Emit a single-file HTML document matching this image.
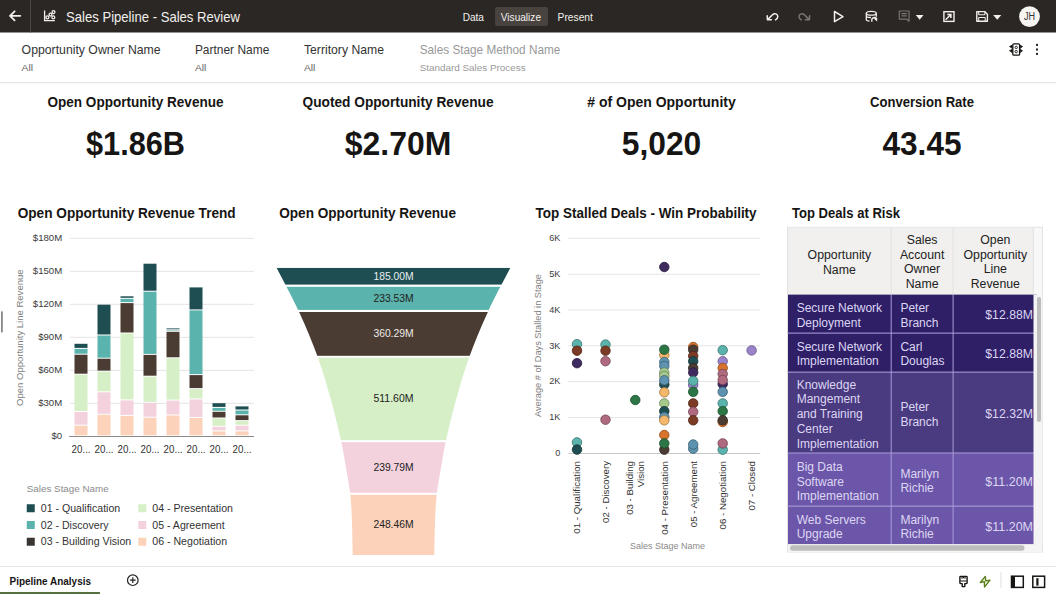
<!DOCTYPE html>
<html><head><meta charset="utf-8"><title>Sales Pipeline - Sales Review</title>
<style>
html,body{margin:0;padding:0;background:#fff;width:1056px;height:594px;overflow:hidden}
svg{display:block;font-family:"Liberation Sans", sans-serif}
</style></head><body>
<svg width="1056" height="594" viewBox="0 0 1056 594">
<rect x="0" y="0" width="1056" height="32.5" fill="#2b2724"/>
<line x1="30.5" y1="0" x2="30.5" y2="32.5" stroke="#4a4541" stroke-width="1"/>
<path d="M20.3 15.8 H10 M14.6 11.3 L10 15.8 L14.6 20.3" stroke="#f2f0ed" stroke-width="1.8" fill="none" stroke-linecap="round" stroke-linejoin="round"/>
<path d="M44.6 10.4 V20.6 H54.8" stroke="#f2f0ed" stroke-width="1.3" fill="none"/>
<circle cx="47.4" cy="17.4" r="1.45" stroke="#f2f0ed" stroke-width="1.3" fill="none"/>
<circle cx="50.5" cy="14.6" r="1.45" stroke="#f2f0ed" stroke-width="1.3" fill="none"/>
<circle cx="53.5" cy="12.1" r="1.45" stroke="#f2f0ed" stroke-width="1.3" fill="none"/>
<circle cx="53.3" cy="17.4" r="1.45" stroke="#f2f0ed" stroke-width="1.3" fill="none"/>
<text x="66" y="22.2" font-size="14.5" fill="#f2f0ed" text-anchor="start" textLength="174" lengthAdjust="spacingAndGlyphs">Sales Pipeline - Sales Review</text>
<rect x="495" y="7" width="53" height="19" rx="2" fill="#48433f"/>
<text x="462.7" y="20.5" font-size="11" fill="#f2f0ed" text-anchor="start" textLength="21.3" lengthAdjust="spacingAndGlyphs">Data</text>
<text x="500.8" y="20.5" font-size="11" fill="#f2f0ed" text-anchor="start" textLength="40.2" lengthAdjust="spacingAndGlyphs">Visualize</text>
<text x="557.6" y="20.5" font-size="11" fill="#f2f0ed" text-anchor="start" textLength="35.3" lengthAdjust="spacingAndGlyphs">Present</text>
<path d="M767.2 15.8 L767.4 19.8 L771.4 19.8 M767.6 19.6 L772.5 14.7 C774.5 12.7 777.8 13.8 777.8 16.5 C777.8 17.8 776.8 19 775.5 19.8" stroke="#f2f0ed" stroke-width="1.5" fill="none" stroke-linecap="round" stroke-linejoin="round"/>
<path d="M809.6 15.8 L809.4 19.8 L805.4 19.8 M809.2 19.6 L804.3 14.7 C802.3 12.7 799 13.8 799 16.5 C799 17.8 800 19 801.3 19.8" stroke="#7a7572" stroke-width="1.5" fill="none" stroke-linecap="round" stroke-linejoin="round"/>
<path d="M834.5 11.5 L843 16.6 L834.5 21.7 Z" stroke="#f2f0ed" stroke-width="1.5" fill="none" stroke-linejoin="round"/>
<ellipse cx="871.3" cy="13.2" rx="5" ry="1.9" stroke="#f2f0ed" stroke-width="1.3" fill="none"/>
<path d="M866.3 13.2 V19.8 C866.3 20.6 867.5 21 869.5 21.2 M876.3 13.2 V16.8 M866.3 16.3 C867 17.2 869 17.6 871 17.5" stroke="#f2f0ed" stroke-width="1.3" fill="none"/>
<path d="M872.2 21.6 A2.5 2.5 0 1 1 876.2 18.6" stroke="#f2f0ed" stroke-width="1.4" fill="none"/>
<path d="M873.6 18.6 L877.2 21.6 L877.2 17.6 Z" fill="#f2f0ed"/>
<path d="M899.3 11 H909 V21.3 L906.7 19.2 H899.3 Z M901.5 13.6 H906.8 M901.5 15.9 H906.8" stroke="#7a7572" stroke-width="1.2" fill="none" stroke-linejoin="round"/>
<path d="M915.8 15 H923.5 L919.65 19.8 Z" fill="#f2f0ed"/>
<rect x="943.9" y="11.7" width="10.1" height="9.7" stroke="#f2f0ed" stroke-width="1.4" fill="none"/>
<path d="M945.6 19.8 L950.9 14.5 M947.3 14.5 H950.9 V18.1" stroke="#f2f0ed" stroke-width="1.5" fill="none"/>
<path d="M976.8 11.6 H984.6 L987.4 14.3 V21.3 H976.8 Z" stroke="#f2f0ed" stroke-width="1.4" fill="none" stroke-linejoin="round"/>
<path d="M978.7 11.6 V14.2 Q978.7 14.8 979.3 14.8 H984.3 Q984.9 14.8 984.9 14.2 V11.6 M978.7 21.3 V18 Q978.7 17.4 979.3 17.4 H984.6 Q985.2 17.4 985.2 18 V21.3" stroke="#f2f0ed" stroke-width="1.05" fill="none"/>
<path d="M993.2 15 H1001.3 L997.25 19.8 Z" fill="#f2f0ed"/>
<circle cx="1029.5" cy="16.6" r="10.4" fill="#f7f5f2"/>
<text x="1029.5" y="20" font-size="10" fill="#333" text-anchor="middle" textLength="11.1" lengthAdjust="spacingAndGlyphs">JH</text>
<rect x="0" y="82" width="1056" height="1.2" fill="#e6e6e6"/>
<text x="21.6" y="54" font-size="12.2" fill="#333" text-anchor="start" textLength="139" lengthAdjust="spacingAndGlyphs">Opportunity Owner Name</text>
<text x="21.6" y="71.2" font-size="9.6" fill="#666" text-anchor="start" textLength="11.4" lengthAdjust="spacingAndGlyphs">All</text>
<text x="194.9" y="54" font-size="12.2" fill="#333" text-anchor="start" textLength="74.4" lengthAdjust="spacingAndGlyphs">Partner Name</text>
<text x="194.9" y="71.2" font-size="9.6" fill="#666" text-anchor="start" textLength="11.4" lengthAdjust="spacingAndGlyphs">All</text>
<text x="304" y="54" font-size="12.2" fill="#333" text-anchor="start">Territory Name</text>
<text x="304" y="71.2" font-size="9.6" fill="#666" text-anchor="start" textLength="11.4" lengthAdjust="spacingAndGlyphs">All</text>
<text x="419.7" y="54" font-size="12.2" fill="#999" text-anchor="start" textLength="140.6" lengthAdjust="spacingAndGlyphs">Sales Stage Method Name</text>
<text x="419.7" y="71.2" font-size="9.6" fill="#9a9a9a" text-anchor="start" textLength="106" lengthAdjust="spacingAndGlyphs">Standard Sales Process</text>
<rect x="1012.8" y="43.8" width="6.8" height="11.4" rx="1.2" stroke="#161513" stroke-width="1.3" fill="none"/>
<circle cx="1016.2" cy="47.4" r="1.2" stroke="#161513" stroke-width="0.9" fill="none"/>
<circle cx="1016.2" cy="51.6" r="1.2" stroke="#161513" stroke-width="0.9" fill="none"/>
<path d="M1012.2 45.2 L1009.5 46.5 L1012.2 48.3 Z M1012.2 49.4 L1009.5 50.7 L1012.2 52.5 Z M1020.2 45.2 L1022.5 46.5 L1020.2 48.3 Z M1020.2 49.4 L1022.5 50.7 L1020.2 52.5 Z" stroke="#161513" stroke-width="0.8" fill="#161513" stroke-linejoin="round"/>
<rect x="1036" y="43.9" width="2" height="2" fill="#222"/>
<rect x="1036" y="48.5" width="2" height="2" fill="#222"/>
<rect x="1036" y="52.9" width="2" height="2" fill="#222"/>
<text x="135.5" y="106.5" font-size="14" fill="#161513" text-anchor="middle" font-weight="700" textLength="176" lengthAdjust="spacingAndGlyphs">Open Opportunity Revenue</text>
<text x="135.5" y="155" font-size="34" fill="#161513" text-anchor="middle" font-weight="700" textLength="99" lengthAdjust="spacingAndGlyphs">$1.86B</text>
<text x="398" y="106.5" font-size="14" fill="#161513" text-anchor="middle" font-weight="700" textLength="191" lengthAdjust="spacingAndGlyphs">Quoted Opportunity Revenue</text>
<text x="398" y="155" font-size="34" fill="#161513" text-anchor="middle" font-weight="700" textLength="106.5" lengthAdjust="spacingAndGlyphs">$2.70M</text>
<text x="661.5" y="106.5" font-size="14" fill="#161513" text-anchor="middle" font-weight="700" textLength="148.5" lengthAdjust="spacingAndGlyphs"># of Open Opportunity</text>
<text x="661.5" y="155" font-size="34" fill="#161513" text-anchor="middle" font-weight="700" textLength="79.5" lengthAdjust="spacingAndGlyphs">5,020</text>
<text x="922" y="106.5" font-size="14" fill="#161513" text-anchor="middle" font-weight="700" textLength="104" lengthAdjust="spacingAndGlyphs">Conversion Rate</text>
<text x="922" y="155" font-size="34" fill="#161513" text-anchor="middle" font-weight="700" textLength="79" lengthAdjust="spacingAndGlyphs">43.45</text>
<text x="17.7" y="217.7" font-size="14.6" fill="#161513" text-anchor="start" font-weight="700" textLength="218" lengthAdjust="spacingAndGlyphs">Open Opportunity Revenue Trend</text>
<text x="279.2" y="217.7" font-size="14.6" fill="#161513" text-anchor="start" font-weight="700" textLength="176.8" lengthAdjust="spacingAndGlyphs">Open Opportunity Revenue</text>
<text x="535.6" y="217.7" font-size="14.6" fill="#161513" text-anchor="start" font-weight="700" textLength="221" lengthAdjust="spacingAndGlyphs">Top Stalled Deals - Win Probability</text>
<text x="792" y="217.7" font-size="14.6" fill="#161513" text-anchor="start" font-weight="700" textLength="108" lengthAdjust="spacingAndGlyphs">Top Deals at Risk</text>
<line x1="70" y1="238.3" x2="254" y2="238.3" stroke="#e4e4e4" stroke-width="1"/>
<line x1="70" y1="271.3" x2="254" y2="271.3" stroke="#e4e4e4" stroke-width="1"/>
<line x1="70" y1="304.3" x2="254" y2="304.3" stroke="#e4e4e4" stroke-width="1"/>
<line x1="70" y1="337.3" x2="254" y2="337.3" stroke="#e4e4e4" stroke-width="1"/>
<line x1="70" y1="370.3" x2="254" y2="370.3" stroke="#e4e4e4" stroke-width="1"/>
<line x1="70" y1="403.3" x2="254" y2="403.3" stroke="#e4e4e4" stroke-width="1"/>
<text x="62.2" y="241.2" font-size="9.6" fill="#3a3a3a" text-anchor="end">$180M</text>
<text x="62.2" y="274.2" font-size="9.6" fill="#3a3a3a" text-anchor="end">$150M</text>
<text x="62.2" y="307.2" font-size="9.6" fill="#3a3a3a" text-anchor="end">$120M</text>
<text x="62.2" y="340.2" font-size="9.6" fill="#3a3a3a" text-anchor="end">$90M</text>
<text x="62.2" y="373.2" font-size="9.6" fill="#3a3a3a" text-anchor="end">$60M</text>
<text x="62.2" y="406.2" font-size="9.6" fill="#3a3a3a" text-anchor="end">$30M</text>
<text x="62.2" y="439.2" font-size="9.6" fill="#3a3a3a" text-anchor="end">$0</text>
<rect x="74.5" y="343.8" width="13" height="4.1" fill="#1f4e52"/>
<rect x="74.5" y="348.9" width="13" height="4.8" fill="#5ab3ac"/>
<rect x="74.5" y="354.7" width="13" height="19.0" fill="#4a3c33"/>
<rect x="74.5" y="374.7" width="13" height="36.3" fill="#d6efc7"/>
<rect x="74.5" y="412" width="13" height="12.7" fill="#f3d2de"/>
<rect x="74.5" y="425.7" width="13" height="9.6" fill="#fcd3ba"/>
<text x="81.1" y="452.9" font-size="10" fill="#333" text-anchor="middle" textLength="19" lengthAdjust="spacingAndGlyphs">20...</text>
<rect x="97.5" y="304.7" width="13" height="29.8" fill="#1f4e52"/>
<rect x="97.5" y="335.5" width="13" height="22.2" fill="#5ab3ac"/>
<rect x="97.5" y="358.7" width="13" height="11.9" fill="#4a3c33"/>
<rect x="97.5" y="371.6" width="13" height="19.7" fill="#d6efc7"/>
<rect x="97.5" y="392.3" width="13" height="21.5" fill="#f3d2de"/>
<rect x="97.5" y="414.8" width="13" height="20.5" fill="#fcd3ba"/>
<text x="104.1" y="452.9" font-size="10" fill="#333" text-anchor="middle" textLength="19" lengthAdjust="spacingAndGlyphs">20...</text>
<rect x="120.5" y="296.3" width="13" height="1.5" fill="#1f4e52"/>
<rect x="120.5" y="298.8" width="13" height="3.3" fill="#5ab3ac"/>
<rect x="120.5" y="303.1" width="13" height="29.4" fill="#4a3c33"/>
<rect x="120.5" y="333.5" width="13" height="65.9" fill="#d6efc7"/>
<rect x="120.5" y="400.4" width="13" height="14.5" fill="#f3d2de"/>
<rect x="120.5" y="415.9" width="13" height="19.4" fill="#fcd3ba"/>
<text x="127.1" y="452.9" font-size="10" fill="#333" text-anchor="middle" textLength="19" lengthAdjust="spacingAndGlyphs">20...</text>
<rect x="143.5" y="263.7" width="13" height="27.0" fill="#1f4e52"/>
<rect x="143.5" y="291.7" width="13" height="62.2" fill="#5ab3ac"/>
<rect x="143.5" y="354.9" width="13" height="20.8" fill="#4a3c33"/>
<rect x="143.5" y="376.7" width="13" height="25.1" fill="#d6efc7"/>
<rect x="143.5" y="402.8" width="13" height="13.9" fill="#f3d2de"/>
<rect x="143.5" y="417.7" width="13" height="17.6" fill="#fcd3ba"/>
<text x="150.1" y="452.9" font-size="10" fill="#333" text-anchor="middle" textLength="19" lengthAdjust="spacingAndGlyphs">20...</text>
<rect x="166.5" y="328.4" width="13" height="0.9" fill="#1f4e52"/>
<rect x="166.5" y="330.3" width="13" height="0.5" fill="#5ab3ac"/>
<rect x="166.5" y="331.8" width="13" height="25.5" fill="#4a3c33"/>
<rect x="166.5" y="358.3" width="13" height="41.3" fill="#d6efc7"/>
<rect x="166.5" y="400.6" width="13" height="13.9" fill="#f3d2de"/>
<rect x="166.5" y="415.5" width="13" height="19.8" fill="#fcd3ba"/>
<text x="173.1" y="452.9" font-size="10" fill="#333" text-anchor="middle" textLength="19" lengthAdjust="spacingAndGlyphs">20...</text>
<rect x="189.5" y="287.4" width="13" height="22.0" fill="#1f4e52"/>
<rect x="189.5" y="310.4" width="13" height="63.7" fill="#5ab3ac"/>
<rect x="189.5" y="375.1" width="13" height="13.0" fill="#4a3c33"/>
<rect x="189.5" y="389.1" width="13" height="9.3" fill="#d6efc7"/>
<rect x="189.5" y="399.4" width="13" height="17.6" fill="#f3d2de"/>
<rect x="189.5" y="418" width="13" height="17.3" fill="#fcd3ba"/>
<text x="196.1" y="452.9" font-size="10" fill="#333" text-anchor="middle" textLength="19" lengthAdjust="spacingAndGlyphs">20...</text>
<rect x="212.5" y="403.2" width="13" height="3.7" fill="#1f4e52"/>
<rect x="212.5" y="407.9" width="13" height="2.9" fill="#5ab3ac"/>
<rect x="212.5" y="411.8" width="13" height="5.7" fill="#4a3c33"/>
<rect x="212.5" y="418.5" width="13" height="7.3" fill="#d6efc7"/>
<rect x="212.5" y="426.8" width="13" height="3.6" fill="#f3d2de"/>
<rect x="212.5" y="431.4" width="13" height="3.9" fill="#fcd3ba"/>
<text x="219.1" y="452.9" font-size="10" fill="#333" text-anchor="middle" textLength="19" lengthAdjust="spacingAndGlyphs">20...</text>
<rect x="235.5" y="406.4" width="13" height="3.1" fill="#1f4e52"/>
<rect x="235.5" y="410.5" width="13" height="3.8" fill="#5ab3ac"/>
<rect x="235.5" y="415.3" width="13" height="4.8" fill="#4a3c33"/>
<rect x="235.5" y="421.1" width="13" height="3.6" fill="#d6efc7"/>
<rect x="235.5" y="425.7" width="13" height="4.7" fill="#f3d2de"/>
<rect x="235.5" y="431.4" width="13" height="3.9" fill="#fcd3ba"/>
<text x="242.1" y="452.9" font-size="10" fill="#333" text-anchor="middle" textLength="19" lengthAdjust="spacingAndGlyphs">20...</text>
<line x1="69" y1="436.5" x2="254" y2="436.5" stroke="#8a8a8a" stroke-width="1.2"/>
<text transform="translate(22.9,337.7) rotate(-90)" x="0" y="0" font-size="9.8" fill="#808080" text-anchor="middle" textLength="136.5" lengthAdjust="spacingAndGlyphs">Open Opportunity Line Revenue</text>
<rect x="1" y="311.4" width="1.8" height="21" fill="#888"/>
<text x="26.75" y="491.7" font-size="9.9" fill="#8a8a8a" text-anchor="start" textLength="82" lengthAdjust="spacingAndGlyphs">Sales Stage Name</text>
<rect x="26.75" y="504.25" width="8" height="8" fill="#1f4e52"/>
<text x="40.75" y="511.95" font-size="10.6" fill="#333" text-anchor="start">01 - Qualification</text>
<rect x="26.75" y="521" width="8" height="8" fill="#5ab3ac"/>
<text x="40.75" y="528.7" font-size="10.6" fill="#333" text-anchor="start">02 - Discovery</text>
<rect x="26.75" y="537.75" width="8" height="8" fill="#3a3532"/>
<text x="40.75" y="545.45" font-size="10.6" fill="#333" text-anchor="start">03 - Building Vision</text>
<rect x="138.25" y="504.25" width="8" height="8" fill="#d6efc7"/>
<text x="152.25" y="511.95" font-size="10.6" fill="#333" text-anchor="start">04 - Presentation</text>
<rect x="138.25" y="521" width="8" height="8" fill="#f3d2de"/>
<text x="152.25" y="528.7" font-size="10.6" fill="#333" text-anchor="start">05 - Agreement</text>
<rect x="138.25" y="537.75" width="8" height="8" fill="#fcd3ba"/>
<text x="152.25" y="545.45" font-size="10.6" fill="#333" text-anchor="start">06 - Negotiation</text>
<clipPath id="fun"><path d="M276.60 267.80 C280.35 275.17 292.22 297.07 299.10 312.00 C305.98 326.93 312.58 342.73 317.90 357.40 C323.22 372.07 327.13 386.07 331.00 400.00 C334.87 413.93 338.60 429.67 341.10 441.00 C343.60 452.33 344.48 459.17 346.00 468.00 C347.52 476.83 349.22 485.33 350.20 494.00 C351.18 502.67 351.48 509.83 351.90 520.00 C352.32 530.17 352.57 549.17 352.70 555.00 L434.30 555.00 C434.43 549.17 434.68 530.17 435.10 520.00 C435.52 509.83 435.82 502.67 436.80 494.00 C437.78 485.33 439.48 476.83 441.00 468.00 C442.52 459.17 443.40 452.33 445.90 441.00 C448.40 429.67 452.13 413.93 456.00 400.00 C459.87 386.07 463.78 372.07 469.10 357.40 C474.42 342.73 481.02 326.93 487.90 312.00 C494.78 297.07 506.65 275.17 510.40 267.80 Z"/></clipPath>
<g clip-path="url(#fun)">
<rect x="270" y="267.8" width="250" height="16.8" fill="#1f4e52"/>
<rect x="270" y="286.8" width="250" height="23.1" fill="#5ab3ac"/>
<rect x="270" y="312" width="250" height="43.8" fill="#4a3c33"/>
<rect x="270" y="357.6" width="250" height="82.6" fill="#d6efc7"/>
<rect x="270" y="442.2" width="250" height="50.6" fill="#f3d2de"/>
<rect x="270" y="494.8" width="250" height="60.2" fill="#fcd3ba"/>
</g>
<text x="393.5" y="279.9" font-size="11" fill="#e9eef0" text-anchor="middle" textLength="40.2" lengthAdjust="spacingAndGlyphs">185.00M</text>
<text x="393.5" y="301.9" font-size="11" fill="#222" text-anchor="middle" textLength="40.2" lengthAdjust="spacingAndGlyphs">233.53M</text>
<text x="393.5" y="336.5" font-size="11" fill="#f0ebe6" text-anchor="middle" textLength="40.2" lengthAdjust="spacingAndGlyphs">360.29M</text>
<text x="393.5" y="402.2" font-size="11" fill="#222" text-anchor="middle" textLength="40.2" lengthAdjust="spacingAndGlyphs">511.60M</text>
<text x="393.5" y="470.7" font-size="11" fill="#222" text-anchor="middle" textLength="40.2" lengthAdjust="spacingAndGlyphs">239.79M</text>
<text x="393.5" y="527.8" font-size="11" fill="#222" text-anchor="middle" textLength="40.2" lengthAdjust="spacingAndGlyphs">248.46M</text>
<line x1="568.3" y1="417.5" x2="760.3" y2="417.5" stroke="#e4e4e4" stroke-width="1"/>
<line x1="568.3" y1="381.6" x2="760.3" y2="381.6" stroke="#e4e4e4" stroke-width="1"/>
<line x1="568.3" y1="345.8" x2="760.3" y2="345.8" stroke="#e4e4e4" stroke-width="1"/>
<line x1="568.3" y1="310.0" x2="760.3" y2="310.0" stroke="#e4e4e4" stroke-width="1"/>
<line x1="568.3" y1="274.2" x2="760.3" y2="274.2" stroke="#e4e4e4" stroke-width="1"/>
<line x1="568.3" y1="238.3" x2="760.3" y2="238.3" stroke="#e4e4e4" stroke-width="1"/>
<line x1="568.3" y1="453.5" x2="760.3" y2="453.5" stroke="#c8c8c8" stroke-width="1.2"/>
<text x="560.3" y="456.1" font-size="9.1" fill="#3a3a3a" text-anchor="end">0</text>
<text x="560.3" y="420.3" font-size="9.1" fill="#3a3a3a" text-anchor="end">1K</text>
<text x="560.3" y="384.4" font-size="9.1" fill="#3a3a3a" text-anchor="end">2K</text>
<text x="560.3" y="348.6" font-size="9.1" fill="#3a3a3a" text-anchor="end">3K</text>
<text x="560.3" y="312.8" font-size="9.1" fill="#3a3a3a" text-anchor="end">4K</text>
<text x="560.3" y="277.0" font-size="9.1" fill="#3a3a3a" text-anchor="end">5K</text>
<text x="560.3" y="241.1" font-size="9.1" fill="#3a3a3a" text-anchor="end">6K</text>
<text transform="translate(541.1,345.5) rotate(-90)" font-size="9.4" fill="#808080" text-anchor="middle" textLength="143" lengthAdjust="spacingAndGlyphs">Average # of Days Stalled in Stage</text>
<circle cx="577" cy="344.2" r="4.75" fill="#5ab3ac" stroke="#3a746f" stroke-width="0.8"/>
<circle cx="577" cy="350.7" r="4.75" fill="#7b3b24" stroke="#4f2617" stroke-width="0.8"/>
<circle cx="577" cy="363.2" r="4.75" fill="#3f2a60" stroke="#281b3e" stroke-width="0.8"/>
<circle cx="577" cy="442.4" r="4.75" fill="#5ab3ac" stroke="#3a746f" stroke-width="0.8"/>
<circle cx="577" cy="449.6" r="4.75" fill="#1f4e52" stroke="#143235" stroke-width="0.8"/>
<circle cx="605.5" cy="344.6" r="4.75" fill="#5ab3ac" stroke="#3a746f" stroke-width="0.8"/>
<circle cx="605.5" cy="350.7" r="4.75" fill="#7b3b24" stroke="#4f2617" stroke-width="0.8"/>
<circle cx="605.5" cy="361.2" r="4.75" fill="#b06a80" stroke="#724453" stroke-width="0.8"/>
<circle cx="605.5" cy="419.7" r="4.75" fill="#b06a80" stroke="#724453" stroke-width="0.8"/>
<circle cx="635.3" cy="400" r="4.75" fill="#2c7646" stroke="#1c4c2d" stroke-width="0.8"/>
<circle cx="664.3" cy="267" r="4.75" fill="#3f2a60" stroke="#281b3e" stroke-width="0.8"/>
<circle cx="664.3" cy="355" r="4.75" fill="#f5b86a" stroke="#9f7744" stroke-width="0.8"/>
<circle cx="664.3" cy="349.7" r="4.75" fill="#2c7646" stroke="#1c4c2d" stroke-width="0.8"/>
<circle cx="664.3" cy="362" r="4.75" fill="#5d93b0" stroke="#3c5f72" stroke-width="0.8"/>
<circle cx="664.3" cy="366" r="4.75" fill="#5d93b0" stroke="#3c5f72" stroke-width="0.8"/>
<circle cx="664.3" cy="372.5" r="4.75" fill="#a6c98c" stroke="#6b825b" stroke-width="0.8"/>
<circle cx="664.3" cy="376" r="4.75" fill="#a6c98c" stroke="#6b825b" stroke-width="0.8"/>
<circle cx="664.3" cy="384.5" r="4.75" fill="#1f4e52" stroke="#143235" stroke-width="0.8"/>
<circle cx="664.3" cy="380.3" r="4.75" fill="#5d93b0" stroke="#3c5f72" stroke-width="0.8"/>
<circle cx="664.3" cy="392.3" r="4.75" fill="#f5b86a" stroke="#9f7744" stroke-width="0.8"/>
<circle cx="664.3" cy="403.4" r="4.75" fill="#a6c98c" stroke="#6b825b" stroke-width="0.8"/>
<circle cx="664.3" cy="411.2" r="4.75" fill="#1f4e52" stroke="#143235" stroke-width="0.8"/>
<circle cx="664.3" cy="417" r="4.75" fill="#5d93b0" stroke="#3c5f72" stroke-width="0.8"/>
<circle cx="664.3" cy="420.3" r="4.75" fill="#f5b86a" stroke="#9f7744" stroke-width="0.8"/>
<circle cx="664.3" cy="435" r="4.75" fill="#d9722b" stroke="#8d4a1b" stroke-width="0.8"/>
<circle cx="664.3" cy="449.7" r="4.75" fill="#4a3c33" stroke="#302721" stroke-width="0.8"/>
<circle cx="664.3" cy="443.4" r="4.75" fill="#2c7646" stroke="#1c4c2d" stroke-width="0.8"/>
<circle cx="693.2" cy="347" r="4.75" fill="#d9722b" stroke="#8d4a1b" stroke-width="0.8"/>
<circle cx="693.2" cy="349.7" r="4.75" fill="#4a3c33" stroke="#302721" stroke-width="0.8"/>
<circle cx="693.2" cy="356" r="4.75" fill="#7b3b24" stroke="#4f2617" stroke-width="0.8"/>
<circle cx="693.2" cy="361.3" r="4.75" fill="#1f4e52" stroke="#143235" stroke-width="0.8"/>
<circle cx="693.2" cy="368" r="4.75" fill="#4a3c33" stroke="#302721" stroke-width="0.8"/>
<circle cx="693.2" cy="372.5" r="4.75" fill="#3f2a60" stroke="#281b3e" stroke-width="0.8"/>
<circle cx="693.2" cy="385" r="4.75" fill="#9b83cc" stroke="#645584" stroke-width="0.8"/>
<circle cx="693.2" cy="380.9" r="4.75" fill="#5ab3ac" stroke="#3a746f" stroke-width="0.8"/>
<circle cx="693.2" cy="391.8" r="4.75" fill="#2c7646" stroke="#1c4c2d" stroke-width="0.8"/>
<circle cx="693.2" cy="403.4" r="4.75" fill="#7b3b24" stroke="#4f2617" stroke-width="0.8"/>
<circle cx="693.2" cy="411.8" r="4.75" fill="#b06a80" stroke="#724453" stroke-width="0.8"/>
<circle cx="693.2" cy="420.3" r="4.75" fill="#7b3b24" stroke="#4f2617" stroke-width="0.8"/>
<circle cx="693.2" cy="448.7" r="4.75" fill="#5d93b0" stroke="#3c5f72" stroke-width="0.8"/>
<circle cx="693.2" cy="444.5" r="4.75" fill="#5d93b0" stroke="#3c5f72" stroke-width="0.8"/>
<circle cx="722.7" cy="350.2" r="4.75" fill="#5ab3ac" stroke="#3a746f" stroke-width="0.8"/>
<circle cx="722.7" cy="361.3" r="4.75" fill="#9b83cc" stroke="#645584" stroke-width="0.8"/>
<circle cx="722.7" cy="368" r="4.75" fill="#d9722b" stroke="#8d4a1b" stroke-width="0.8"/>
<circle cx="722.7" cy="384" r="4.75" fill="#3f2a60" stroke="#281b3e" stroke-width="0.8"/>
<circle cx="722.7" cy="374" r="4.75" fill="#b06a80" stroke="#724453" stroke-width="0.8"/>
<circle cx="722.7" cy="380" r="4.75" fill="#b06a80" stroke="#724453" stroke-width="0.8"/>
<circle cx="722.7" cy="391.8" r="4.75" fill="#5d93b0" stroke="#3c5f72" stroke-width="0.8"/>
<circle cx="722.7" cy="403.4" r="4.75" fill="#5ab3ac" stroke="#3a746f" stroke-width="0.8"/>
<circle cx="722.7" cy="411.2" r="4.75" fill="#2c7646" stroke="#1c4c2d" stroke-width="0.8"/>
<circle cx="722.7" cy="422" r="4.75" fill="#d9722b" stroke="#8d4a1b" stroke-width="0.8"/>
<circle cx="722.7" cy="420.3" r="4.75" fill="#4a3c33" stroke="#302721" stroke-width="0.8"/>
<circle cx="722.7" cy="449.7" r="4.75" fill="#5ab3ac" stroke="#3a746f" stroke-width="0.8"/>
<circle cx="722.7" cy="443.4" r="4.75" fill="#b06a80" stroke="#724453" stroke-width="0.8"/>
<circle cx="751.6" cy="350.4" r="4.75" fill="#9b83cc" stroke="#645584" stroke-width="0.8"/>
<text transform="translate(580.3,461) rotate(-90)" font-size="9.7" fill="#333" text-anchor="end">01 - Qualification</text>
<text transform="translate(608.8,461) rotate(-90)" font-size="9.7" fill="#333" text-anchor="end">02 - Discovery</text>
<text transform="translate(667.5999999999999,461) rotate(-90)" font-size="9.7" fill="#333" text-anchor="end">04 - Presentation</text>
<text transform="translate(696.5,461) rotate(-90)" font-size="9.7" fill="#333" text-anchor="end">05 - Agreement</text>
<text transform="translate(726.0,461) rotate(-90)" font-size="9.7" fill="#333" text-anchor="end">06 - Negotiation</text>
<text transform="translate(754.9,461) rotate(-90)" font-size="9.7" fill="#333" text-anchor="end">07 - Closed</text>
<text transform="translate(632.5999999999999,461) rotate(-90)" font-size="9.7" fill="#333" text-anchor="end">03 - Building</text>
<text transform="translate(644.0,461) rotate(-90)" font-size="9.7" fill="#333" text-anchor="end">Vision</text>
<text x="667.5" y="548.8" font-size="9.5" fill="#8a8a8a" text-anchor="middle" textLength="75" lengthAdjust="spacingAndGlyphs">Sales Stage Name</text>
<rect x="787.5" y="227.3" width="255.0" height="324.7" fill="#ffffff" stroke="#e2e2e2" stroke-width="1"/>
<rect x="788.0" y="227.8" width="254.0" height="66.80000000000001" fill="#f8f8f8"/>
<rect x="788.0" y="227.8" width="245.5" height="66.80000000000001" fill="#f1f0ee"/>
<rect x="788.0" y="294.6" width="249.0" height="38.5" fill="#2e1f67"/>
<rect x="788.0" y="333.1" width="249.0" height="39.0" fill="#2e1f67"/>
<rect x="788.0" y="372.1" width="249.0" height="80.9" fill="#4a3a80"/>
<rect x="788.0" y="453" width="249.0" height="53.1" fill="#6c56a9"/>
<rect x="788.0" y="506.1" width="249.0" height="38.2" fill="#6c56a9"/>
<line x1="891.2" y1="227.3" x2="891.2" y2="294.6" stroke="#e2e2e2" stroke-width="1"/>
<line x1="891.2" y1="294.6" x2="891.2" y2="544.3" stroke="#a99cd8" stroke-width="1"/>
<line x1="953.1" y1="227.3" x2="953.1" y2="294.6" stroke="#e2e2e2" stroke-width="1"/>
<line x1="953.1" y1="294.6" x2="953.1" y2="544.3" stroke="#a99cd8" stroke-width="1"/>
<line x1="1033.3" y1="227.3" x2="1033.3" y2="294.6" stroke="#e2e2e2" stroke-width="1"/>
<line x1="787.5" y1="333.1" x2="1037" y2="333.1" stroke="#a99cd8" stroke-width="1"/>
<line x1="787.5" y1="372.1" x2="1037" y2="372.1" stroke="#a99cd8" stroke-width="1"/>
<line x1="787.5" y1="453" x2="1037" y2="453" stroke="#a99cd8" stroke-width="1"/>
<line x1="787.5" y1="506.1" x2="1037" y2="506.1" stroke="#a99cd8" stroke-width="1"/>
<text x="839.4" y="259.0" font-size="12.3" fill="#222" text-anchor="middle">Opportunity</text>
<text x="839.4" y="273.6" font-size="12.3" fill="#222" text-anchor="middle">Name</text>
<text x="922.1" y="244.2" font-size="12.3" fill="#222" text-anchor="middle">Sales</text>
<text x="922.1" y="258.8" font-size="12.3" fill="#222" text-anchor="middle">Account</text>
<text x="922.1" y="273.4" font-size="12.3" fill="#222" text-anchor="middle">Owner</text>
<text x="922.1" y="288.0" font-size="12.3" fill="#222" text-anchor="middle">Name</text>
<text x="995.3" y="244.2" font-size="12.3" fill="#222" text-anchor="middle">Open</text>
<text x="995.3" y="258.8" font-size="12.3" fill="#222" text-anchor="middle">Opportunity</text>
<text x="995.3" y="273.4" font-size="12.3" fill="#222" text-anchor="middle">Line</text>
<text x="995.3" y="288.0" font-size="12.3" fill="#222" text-anchor="middle">Revenue</text>
<text x="796.7" y="311.7" font-size="12" fill="#ddd6f3" text-anchor="start">Secure Network</text>
<text x="796.7" y="326.5" font-size="12" fill="#ddd6f3" text-anchor="start">Deployment</text>
<text x="900.4" y="311.7" font-size="12" fill="#ddd6f3" text-anchor="start">Peter</text>
<text x="900.4" y="326.5" font-size="12" fill="#ddd6f3" text-anchor="start">Branch</text>
<text x="1033" y="319.1" font-size="12.3" fill="#ddd6f3" text-anchor="end" textLength="47.7" lengthAdjust="spacingAndGlyphs">$12.88M</text>
<text x="796.7" y="350.6" font-size="12" fill="#ddd6f3" text-anchor="start">Secure Network</text>
<text x="796.7" y="365.4" font-size="12" fill="#ddd6f3" text-anchor="start">Implementation</text>
<text x="900.4" y="350.6" font-size="12" fill="#ddd6f3" text-anchor="start">Carl</text>
<text x="900.4" y="365.4" font-size="12" fill="#ddd6f3" text-anchor="start">Douglas</text>
<text x="1033" y="357.9" font-size="12.3" fill="#ddd6f3" text-anchor="end" textLength="47.7" lengthAdjust="spacingAndGlyphs">$12.88M</text>
<text x="796.7" y="388.6" font-size="12" fill="#ddd6f3" text-anchor="start">Knowledge</text>
<text x="796.7" y="403.4" font-size="12" fill="#ddd6f3" text-anchor="start">Mangement</text>
<text x="796.7" y="418.2" font-size="12" fill="#ddd6f3" text-anchor="start">and Training</text>
<text x="796.7" y="433.0" font-size="12" fill="#ddd6f3" text-anchor="start">Center</text>
<text x="796.7" y="447.8" font-size="12" fill="#ddd6f3" text-anchor="start">Implementation</text>
<text x="900.4" y="411.0" font-size="12" fill="#ddd6f3" text-anchor="start">Peter</text>
<text x="900.4" y="425.8" font-size="12" fill="#ddd6f3" text-anchor="start">Branch</text>
<text x="1033" y="418.2" font-size="12.3" fill="#ddd6f3" text-anchor="end" textLength="47.7" lengthAdjust="spacingAndGlyphs">$12.32M</text>
<text x="796.7" y="470.7" font-size="12" fill="#ddd6f3" text-anchor="start">Big Data</text>
<text x="796.7" y="485.5" font-size="12" fill="#ddd6f3" text-anchor="start">Software</text>
<text x="796.7" y="500.3" font-size="12" fill="#ddd6f3" text-anchor="start">Implementation</text>
<text x="900.4" y="477.6" font-size="12" fill="#ddd6f3" text-anchor="start">Marilyn</text>
<text x="900.4" y="492.4" font-size="12" fill="#ddd6f3" text-anchor="start">Richie</text>
<text x="1033" y="485.8" font-size="12.3" fill="#ddd6f3" text-anchor="end" textLength="47.7" lengthAdjust="spacingAndGlyphs">$11.20M</text>
<text x="796.7" y="523.5" font-size="12" fill="#ddd6f3" text-anchor="start">Web Servers</text>
<text x="796.7" y="538.3" font-size="12" fill="#ddd6f3" text-anchor="start">Upgrade</text>
<text x="900.4" y="523.5" font-size="12" fill="#ddd6f3" text-anchor="start">Marilyn</text>
<text x="900.4" y="538.3" font-size="12" fill="#ddd6f3" text-anchor="start">Richie</text>
<text x="1033" y="531" font-size="12.3" fill="#ddd6f3" text-anchor="end" textLength="47.7" lengthAdjust="spacingAndGlyphs">$11.20M</text>
<rect x="1033.5" y="294.6" width="9" height="250" fill="#f4f4f4"/>
<rect x="1037" y="297" width="4" height="125" fill="#bdbdbd" rx="2"/>
<rect x="788.0" y="544.3" width="254.0" height="7.5" fill="#f4f4f4"/>
<rect x="790" y="545.3" width="234.5" height="5.5" fill="#bdbdbd" rx="2.7"/>
<rect x="0" y="566" width="1056" height="1" fill="#e4e4e4"/>
<text x="9.5" y="585" font-size="10.8" fill="#161513" text-anchor="start" font-weight="700" textLength="81.5" lengthAdjust="spacingAndGlyphs">Pipeline Analysis</text>
<rect x="0" y="592" width="100" height="2" fill="#56703f"/>
<circle cx="132.8" cy="580.2" r="5.3" stroke="#222" stroke-width="1.2" fill="none"/>
<path d="M132.8 577.3 V583.1 M129.9 580.2 H135.7" stroke="#222" stroke-width="1.2"/>
<path d="M959.9 577 Q959.9 576.4 960.6 576.4 H966.4 Q967.1 576.4 967.1 577 V582.8 Q967.1 583.6 966 583.6 H964.8 V586.6 H962.2 V583.6 H961 Q959.9 583.6 959.9 582.8 Z" stroke="#161513" stroke-width="1.4" fill="none" stroke-linejoin="round"/>
<path d="M960.2 581 H966.8 M962 577 V578.8 M963.5 577 V578.3 M965 577 V578.8" stroke="#161513" stroke-width="1.1" fill="none"/>
<path d="M985.3 576.4 L980.3 582.5 L984.3 581.6 L984.5 587 L990 580.2 L985.8 580.9 Z" stroke="#5a7d1c" stroke-width="1.3" fill="#e8f0d0" stroke-linejoin="round"/>
<rect x="1000.5" y="572" width="1" height="16" fill="#e0e0e0"/>
<rect x="1011.5" y="576.2" width="11.8" height="11.2" stroke="#161513" stroke-width="1.5" fill="none"/>
<rect x="1011.5" y="576.2" width="3.5" height="11.2" fill="#161513"/>
<rect x="1032.8" y="576.2" width="11.8" height="11.2" stroke="#161513" stroke-width="1.5" fill="none"/>
<rect x="1036.3" y="578.2" width="2.2" height="7.4" fill="#161513"/>
</svg>
</body></html>
